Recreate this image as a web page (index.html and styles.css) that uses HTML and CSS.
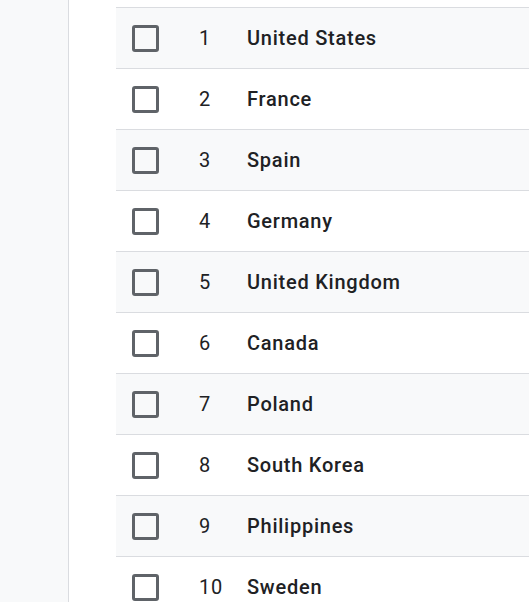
FILE: index.html
```html
<!DOCTYPE html>
<html>
<head>
<meta charset="utf-8">
<link rel="stylesheet" href="styles.css">
</head>
<body>
<div class="app">
  <aside class="sidebar"></aside>
  <main class="main">
    <div class="table">
      <div class="row"><div class="cell-check"><span class="checkbox"></span></div><div class="cell-num">1</div><div class="cell-name">United States</div></div>
      <div class="row"><div class="cell-check"><span class="checkbox"></span></div><div class="cell-num">2</div><div class="cell-name">France</div></div>
      <div class="row"><div class="cell-check"><span class="checkbox"></span></div><div class="cell-num">3</div><div class="cell-name">Spain</div></div>
      <div class="row"><div class="cell-check"><span class="checkbox"></span></div><div class="cell-num">4</div><div class="cell-name">Germany</div></div>
      <div class="row"><div class="cell-check"><span class="checkbox"></span></div><div class="cell-num">5</div><div class="cell-name">United Kingdom</div></div>
      <div class="row"><div class="cell-check"><span class="checkbox"></span></div><div class="cell-num">6</div><div class="cell-name">Canada</div></div>
      <div class="row"><div class="cell-check"><span class="checkbox"></span></div><div class="cell-num">7</div><div class="cell-name">Poland</div></div>
      <div class="row"><div class="cell-check"><span class="checkbox"></span></div><div class="cell-num">8</div><div class="cell-name">South Korea</div></div>
      <div class="row"><div class="cell-check"><span class="checkbox"></span></div><div class="cell-num">9</div><div class="cell-name">Philippines</div></div>
      <div class="row"><div class="cell-check"><span class="checkbox"></span></div><div class="cell-num">10</div><div class="cell-name">Sweden</div></div>
    </div>
  </main>
</div>
</body>
</html>
```
FILE: styles.css
```css
html, body {
  margin: 0;
  padding: 0;
  overflow: hidden;
  background: #ffffff;
}
body {
  font-family: Roboto, "Liberation Sans", sans-serif;
  color: #202124;
}
.app {
  display: flex;
  height: 602px;
}
.sidebar {
  width: 68px;
  flex: none;
  background: #f8f9fa;
  border-right: 1px solid #dadce0;
}
.main {
  flex: 1;
  padding: 7px 0 0 47px;
}
.table {
  border-top: 1px solid #dadce0;
}
.row {
  display: grid;
  grid-template-columns: 83px 48px 1fr;
  align-items: center;
  height: 60px;
  border-bottom: 1px solid #dadce0;
  font-size: 20px;
  letter-spacing: 0.75px;
}
.row:nth-child(odd) {
  background: #f8f9fa;
}
.cell-check {
  padding-left: 16px;
  display: flex;
  align-items: center;
}
.checkbox {
  width: 21px;
  height: 21px;
  border: 3px solid #5f6368;
  border-radius: 3px;
  display: block;
}
.cell-num {
  font-weight: 400;
}
.cell-name {
  font-weight: 500;
  white-space: nowrap;
}
```
